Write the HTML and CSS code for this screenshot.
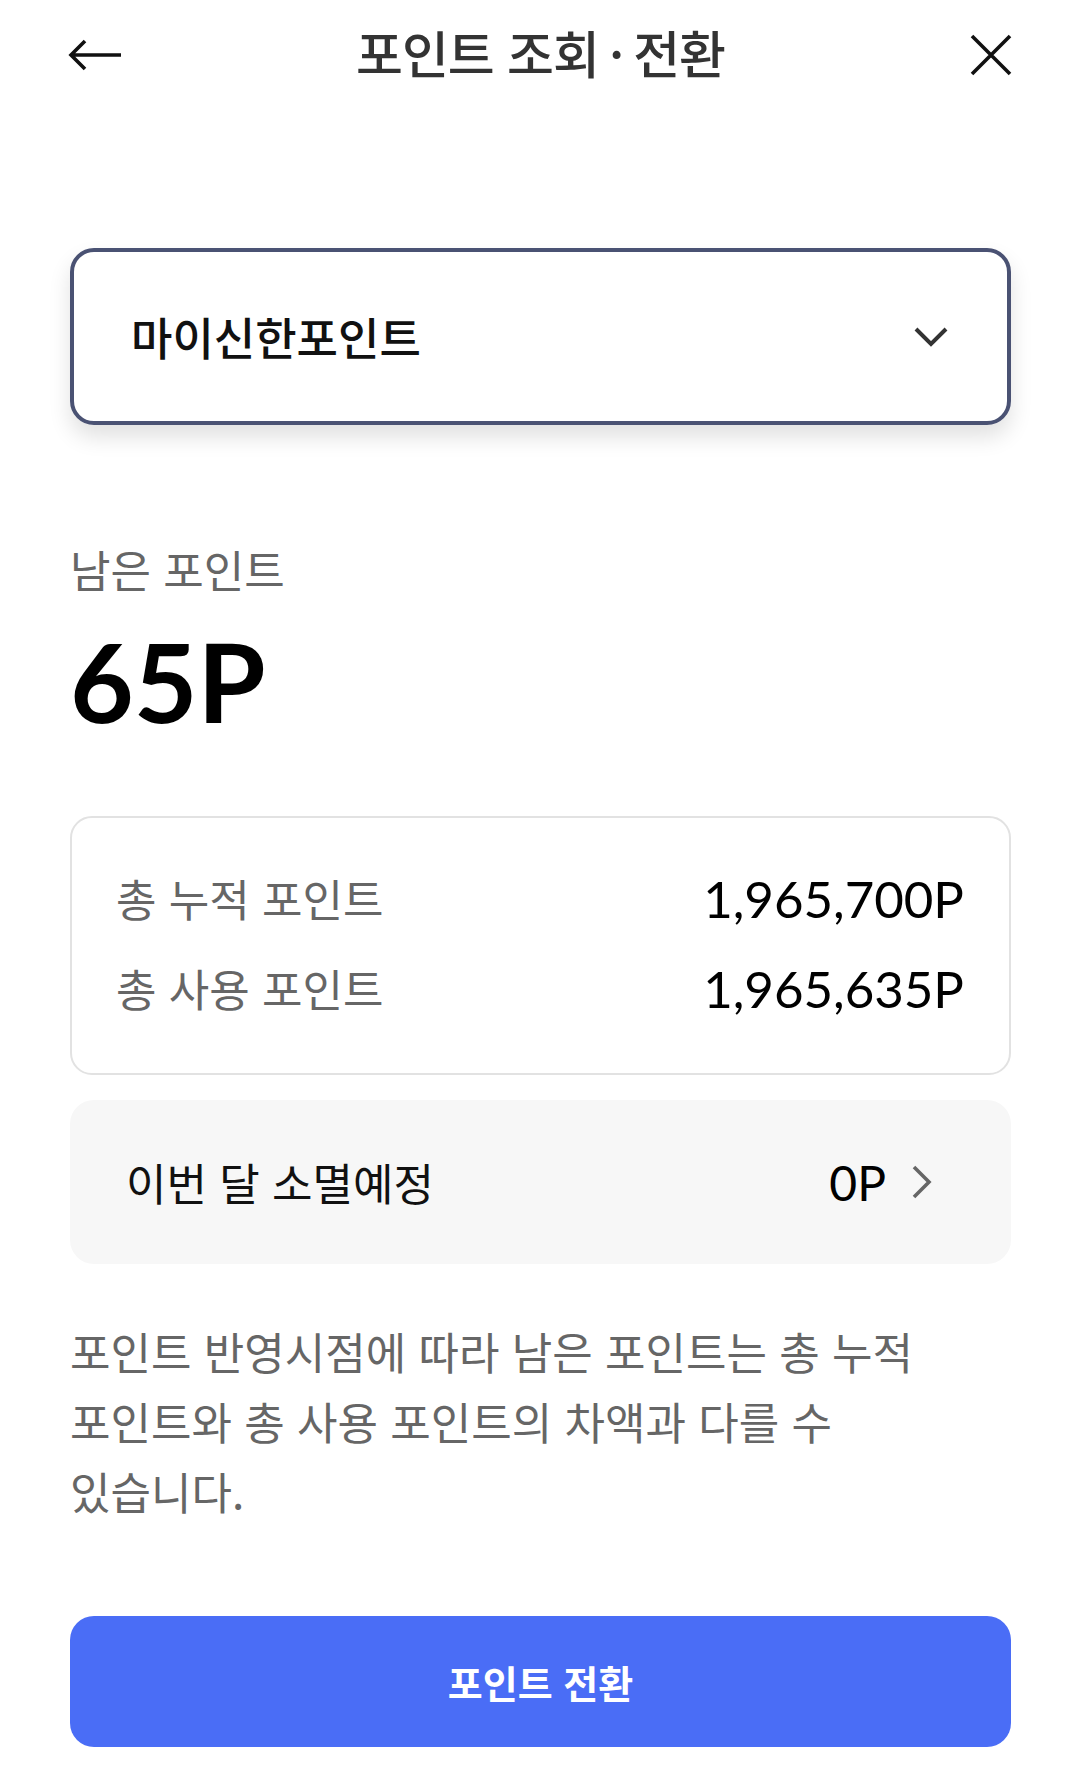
FILE: index.html
```html
<!DOCTYPE html>
<html lang="ko">
<head>
    <meta charset="UTF-8">
    <meta name="viewport" content="width=device-width, initial-scale=1.0">
    <title>포인트 조회·전환</title>
    <link rel="stylesheet" href="styles.css">
</head>
<body>
    <header class="top-bar">
        <button class="icon-btn back" aria-label="뒤로">
            <svg width="54" height="32" viewBox="0 0 54 32">
                <path d="M53 16H3M17 2L3 16L17 30" fill="none" stroke="#111" stroke-width="3.6"/>
            </svg>
        </button>
        <h1 class="page-title">포인트 조회<span class="dot">·</span>전환</h1>
        <button class="icon-btn close" aria-label="닫기">
            <svg width="44" height="44" viewBox="0 0 44 44">
                <path d="M3 3L41 41M41 3L3 41" fill="none" stroke="#111" stroke-width="3.6"/>
            </svg>
        </button>
    </header>

    <div class="select-box">
        <span class="select-value">마이신한포인트</span>
        <svg width="36" height="22" viewBox="0 0 36 22">
            <path d="M3 3L18 18L33 3" fill="none" stroke="#333" stroke-width="4"/>
        </svg>
    </div>

    <div class="balance">
        <div class="balance-label">남은 포인트</div>
        <div class="balance-value num">65P</div>
    </div>

    <div class="summary">
        <div class="summary-row">
            <span class="summary-label">총 누적 포인트</span>
            <span class="summary-value num">1,965,700P</span>
        </div>
        <div class="summary-row">
            <span class="summary-label">총 사용 포인트</span>
            <span class="summary-value num">1,965,635P</span>
        </div>
    </div>

    <div class="expire-box">
        <span class="expire-label">이번 달 소멸예정</span>
        <span class="expire-right">
            <span class="expire-value num">0P</span>
            <svg width="22" height="36" viewBox="0 0 22 36">
                <path d="M3 3L18 18L3 33" fill="none" stroke="#666" stroke-width="3.6"/>
            </svg>
        </span>
    </div>

    <p class="note">포인트 반영시점에 따라 남은 포인트는 총 누적 포인트와 총 사용 포인트의 차액과 다를 수 있습니다.</p>

    <button class="btn-primary">포인트 전환</button>
</body>
</html>
```

FILE: styles.css
```css
body {
    margin: 0;
    padding: 0 69px 0 70px;
    font-family: "Noto Sans CJK KR", sans-serif;
    background: #fff;
    color: #111;
    word-break: keep-all;
}
.num {
    font-family: Lato, "Noto Sans CJK KR", sans-serif;
}
.top-bar {
    display: grid;
    grid-template-columns: 1fr auto 1fr;
    align-items: center;
    height: 110px;
}
.icon-btn {
    background: none;
    border: none;
    padding: 0;
    display: flex;
}
.back {
    justify-self: start;
    margin-left: -2px;
}
.close {
    justify-self: end;
    margin-right: -2px;
}
.page-title {
    margin: -6px 0 0;
    font-size: 51px;
    font-weight: 500;
    color: #333;
    letter-spacing: -1px;
}
.dot {
    margin: 0 10px;
}
.select-box {
    margin-top: 138px;
    height: 177px;
    box-sizing: border-box;
    border: 4px solid #4a5273;
    border-radius: 24px;
    padding: 0 58px 0 57px;
    display: flex;
    align-items: center;
    justify-content: space-between;
    box-shadow: 0 12px 22px rgba(0,0,0,0.12);
}
.select-value {
    font-size: 45px;
    font-weight: 500;
    color: #111;
}
.balance {
    margin-top: 116px;
}
.balance-label {
    font-size: 44px;
    line-height: 56px;
    color: #666;
}
.balance-value {
    margin-top: 27px;
    font-size: 110px;
    line-height: 112px;
    font-weight: 700;
    color: #000;
}
.summary {
    margin-top: 80px;
    border: 2px solid #e2e2e2;
    border-radius: 22px;
    padding: 52px 45px 57px 44px;
    display: flex;
    flex-direction: column;
    gap: 34px;
}
.summary-row {
    display: flex;
    justify-content: space-between;
    align-items: center;
    height: 56px;
}
.summary-label {
    font-size: 44px;
    color: #666;
}
.summary-value {
    font-size: 51px;
    color: #000;
}
.expire-box {
    margin-top: 25px;
    height: 164px;
    box-sizing: border-box;
    background: #f7f7f7;
    border-radius: 24px;
    padding: 0 78px 0 56px;
    display: flex;
    align-items: center;
    justify-content: space-between;
}
.expire-label {
    font-size: 44px;
    color: #111;
}
.expire-right {
    display: flex;
    align-items: center;
    gap: 25px;
}
.expire-value {
    font-size: 48px;
    color: #000;
}
.note {
    margin: 52px 0 0;
    max-width: 900px;
    font-size: 44px;
    line-height: 70px;
    color: #666;
}
.btn-primary {
    display: block;
    width: 100%;
    margin-top: 90px;
    height: 131px;
    border: none;
    border-radius: 24px;
    background: #4a6df6;
    color: #fff;
    font-family: "Noto Sans CJK KR", sans-serif;
    font-size: 38px;
    font-weight: 700;
}
```
